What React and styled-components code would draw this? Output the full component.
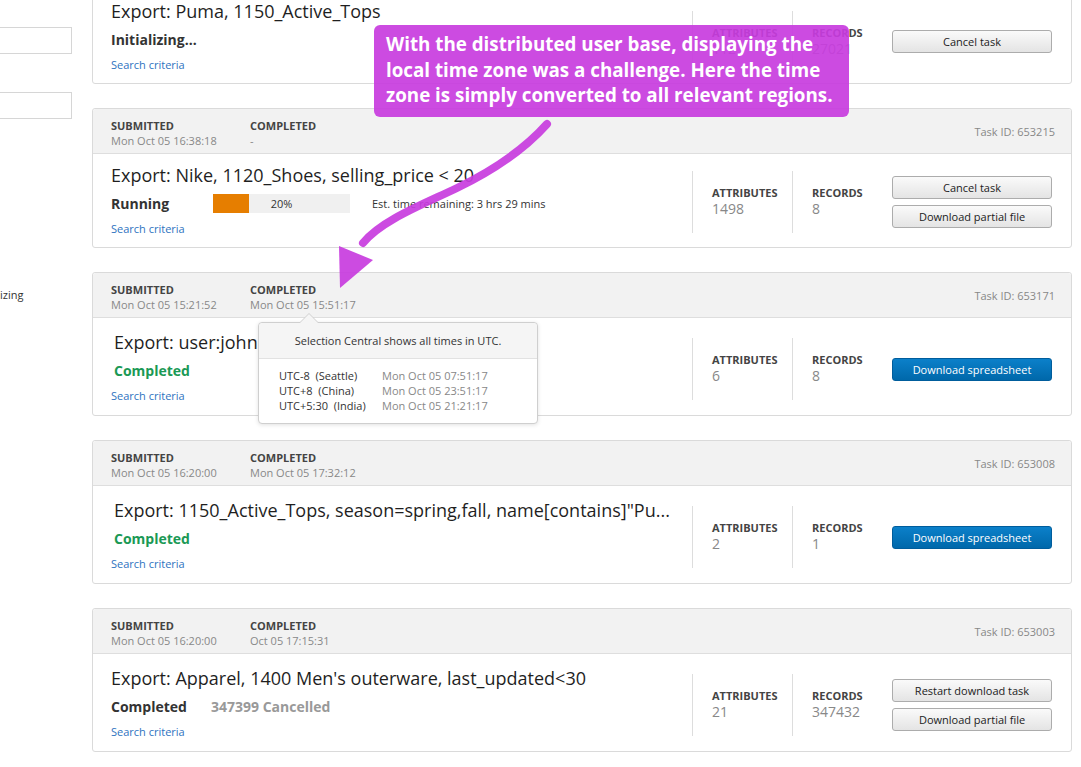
import React from 'react'
import styled, { createGlobalStyle } from 'styled-components'

const GlobalStyle = createGlobalStyle`
  *, *::before, *::after { box-sizing: border-box; }
  html, body { margin: 0; padding: 0; background: #fff; }
  body {
    font-family: "Open Sans", "Liberation Sans", Arial, sans-serif;
    color: #333;
    overflow: hidden;
  }
`

const Page = styled.div`
  position: relative;
  display: grid;
  grid-template-columns: 72px 980px;
  column-gap: 20px;
  width: 1081px;
  height: 767px;
  overflow: hidden;
`

const Sidebar = styled.aside`
  display: flex;
  flex-direction: column;
  gap: 38px;
  padding-top: 27px;
`

const Field = styled.div`
  height: 27px;
  border: 1px solid #d6d6d6;
  border-left: none;
  background: #fff;
`

const SideText = styled.div`
  margin-top: 130px;
  font-size: 11px;
  line-height: 16px;
  color: #333;
`

const Main = styled.main`
  display: flex;
  flex-direction: column;
  gap: 24px;
  margin-top: -56px;
`

const Card = styled.section`
  position: relative;
  border: 1px solid #dadada;
  border-radius: 3px;
  background: #fff;
`

const CardHeader = styled.header`
  display: flex;
  align-items: flex-start;
  height: 45px;
  padding: 10px 16px 0 18px;
  background: #f2f2f2;
  border-bottom: 1px solid #dedede;
  border-radius: 3px 3px 0 0;
`

const HeaderCol = styled.div`
  width: 139px;
`

const Label = styled.div`
  font-size: 11px;
  line-height: 14px;
  font-weight: 700;
  color: #444;
  text-transform: uppercase;
`

const Value = styled.div`
  font-size: 11px;
  line-height: 15px;
  color: #888;
`

const TaskId = styled.div`
  margin-left: auto;
  align-self: center;
  margin-top: -10px;
  font-size: 11px;
  color: #888;
`

const Body = styled.div`
  display: flex;
  align-items: center;
  padding: ${p => (p.$compact ? '8px 19px 10px 18px' : '11px 19px 11px 18px')};
`

const Info = styled.div`
  flex: 1;
  min-width: 0;
  padding-right: 20px;
`

const Title = styled.h2`
  margin: 0 0 0 ${p => p.$inset || 0}px;
  font-size: 18px;
  line-height: 26px;
  font-weight: 400;
  color: #1f1f1f;
  white-space: nowrap;
  overflow: hidden;
  text-overflow: ellipsis;
`

const StatusRow = styled.div`
  display: flex;
  align-items: center;
  height: 22px;
  margin-top: 4px;
  font-size: 14px;
`

const Status = styled.span`
  width: 100px;
  margin-left: ${p => p.$inset || 0}px;
  font-weight: 700;
  color: ${p => p.$color || '#333'};
`

const Muted = styled.span`
  font-weight: 700;
  color: #999;
`

const Progress = styled.div`
  position: relative;
  display: flex;
  align-items: center;
  justify-content: center;
  width: 137px;
  height: 19px;
  margin-left: 2px;
  background: #f0f0f0;
  font-size: 11px;
  color: #333;
`

const ProgressFill = styled.div`
  position: absolute;
  left: 0;
  top: 0;
  bottom: 0;
  background: #e67e00;
`

const ProgressText = styled.span`
  position: relative;
`

const Remaining = styled.span`
  margin-left: 22px;
  font-size: 11px;
  color: #333;
`

const Link = styled.a`
  display: block;
  margin-top: 7px;
  font-size: 11px;
  line-height: 16px;
  color: #2e73c0;
  text-decoration: none;
`

const Side = styled.div`
  display: flex;
  align-items: center;
  padding-top: ${p => (p.$lower ? 12 : 5)}px;
`

const Stat = styled.div`
  display: flex;
  flex-direction: column;
  justify-content: center;
  width: 100px;
  height: 62px;
  padding-left: 19px;
  border-left: 1px solid #ddd;
`

const StatValue = styled.div`
  font-size: 14px;
  line-height: 18px;
  color: #888;
`

const Actions = styled.div`
  display: flex;
  flex-direction: column;
  gap: 6px;
  width: 160px;
`

const Button = styled.button`
  height: 23px;
  padding: 0;
  border: 1px solid ${p => (p.$primary ? '#005d9c' : '#acacac')};
  border-radius: 3px;
  background: ${p =>
    p.$primary
      ? 'linear-gradient(#0b80ca, #0068aa)'
      : 'linear-gradient(#fafafa, #e4e4e4)'};
  font-family: inherit;
  font-size: 11px;
  color: ${p => (p.$primary ? '#fff' : '#222')};
`

const Tooltip = styled.div`
  position: absolute;
  left: 165px;
  top: 49px;
  width: 280px;
  z-index: 2;
  background: #fff;
  border: 1px solid #cfcfcf;
  border-radius: 4px;
  box-shadow: 0 1px 4px rgba(0, 0, 0, 0.12);

  &::before,
  &::after {
    content: '';
    position: absolute;
    left: 40px;
    border: 10px solid transparent;
    border-top: none;
  }
  &::before {
    top: -10px;
    border-bottom-color: #cfcfcf;
  }
  &::after {
    top: -9px;
    border-bottom-color: #f5f5f5;
  }
`

const TipHead = styled.div`
  height: 36px;
  line-height: 36px;
  text-align: center;
  font-size: 11px;
  color: #333;
  background: #f5f5f5;
  border-bottom: 1px solid #e2e2e2;
  border-radius: 4px 4px 0 0;
`

const TipBody = styled.div`
  display: grid;
  grid-template-columns: 103px auto;
  padding: 9px 20px 10px;
  font-size: 11px;
  line-height: 15px;
`

const Zone = styled.span`
  color: #333;
  white-space: pre;
`

const ZoneTime = styled.span`
  color: #888;
`

const Callout = styled.div`
  position: absolute;
  left: 374px;
  top: 25px;
  width: 475px;
  padding: 7px 0 8px 12px;
  z-index: 3;
  background: rgba(200, 60, 222, 0.92);
  border-radius: 6px;
  font-size: 18.8px;
  line-height: 25.5px;
  font-weight: 700;
  color: #fff;
  white-space: pre;
`

const Overlay = styled.svg`
  position: absolute;
  left: 0;
  top: 0;
  z-index: 3;
  pointer-events: none;
`

const tasks = [
  {
    id: '653220',
    submitted: 'Mon Oct 05 16:40:02',
    completed: '-',
    title: 'Export: Puma, 1150_Active_Tops',
    kind: 'init',
    lower: true,
    attrs: '112',
    records: '27021',
    actions: ['Cancel task'],
  },
  {
    id: '653215',
    submitted: 'Mon Oct 05 16:38:18',
    completed: '-',
    title: 'Export: Nike, 1120_Shoes, selling_price < 20',
    kind: 'running',
    progress: 26,
    attrs: '1498',
    records: '8',
    actions: ['Cancel task', 'Download partial file'],
  },
  {
    id: '653171',
    submitted: 'Mon Oct 05 15:21:52',
    completed: 'Mon Oct 05 15:51:17',
    title: 'Export: user:john',
    kind: 'done',
    inset: 3,
    tooltip: true,
    attrs: '6',
    records: '8',
    actions: ['Download spreadsheet'],
  },
  {
    id: '653008',
    submitted: 'Mon Oct 05 16:20:00',
    completed: 'Mon Oct 05 17:32:12',
    title: 'Export: 1150_Active_Tops, season=spring,fall, name[contains]"Pu...',
    kind: 'done',
    inset: 3,
    attrs: '2',
    records: '1',
    actions: ['Download spreadsheet'],
  },
  {
    id: '653003',
    submitted: 'Mon Oct 05 16:20:00',
    completed: 'Oct 05 17:15:31',
    title: "Export: Apparel, 1400 Men's outerware, last_updated<30",
    kind: 'partial',
    attrs: '21',
    records: '347432',
    actions: ['Restart download task', 'Download partial file'],
  },
]

const zones = [
  ['UTC-8  (Seattle)', 'Mon Oct 05 07:51:17'],
  ['UTC+8  (China)', 'Mon Oct 05 23:51:17'],
  ['UTC+5:30  (India)', 'Mon Oct 05 21:21:17'],
]

const StatusLine = ({ task }) => {
  if (task.kind === 'init') {
    return (
      <StatusRow>
        <Status>Initializing...</Status>
      </StatusRow>
    )
  }
  if (task.kind === 'running') {
    return (
      <StatusRow>
        <Status>Running</Status>
        <Progress>
          <ProgressFill style={{ width: `${task.progress}%` }} />
          <ProgressText>20%</ProgressText>
        </Progress>
        <Remaining>Est. time remaining: 3 hrs 29 mins</Remaining>
      </StatusRow>
    )
  }
  if (task.kind === 'partial') {
    return (
      <StatusRow>
        <Status>Completed</Status>
        <Muted>347399 Cancelled</Muted>
      </StatusRow>
    )
  }
  return (
    <StatusRow>
      <Status $color="#1a9955" $inset={task.inset}>
        Completed
      </Status>
    </StatusRow>
  )
}

const TaskCard = ({ task }) => {
  const compact = task.kind === 'init' || task.kind === 'running'
  return (
    <Card>
      <CardHeader>
        <HeaderCol>
          <Label>Submitted</Label>
          <Value>{task.submitted}</Value>
        </HeaderCol>
        <HeaderCol>
          <Label>Completed</Label>
          <Value>{task.completed}</Value>
        </HeaderCol>
        <TaskId>Task ID: {task.id}</TaskId>
      </CardHeader>
      <Body $compact={compact}>
        <Info>
          <Title $inset={task.inset}>{task.title}</Title>
          <StatusLine task={task} />
          <Link href="#">Search criteria</Link>
        </Info>
        <Side $lower={task.lower}>
          <Stat>
            <Label>Attributes</Label>
            <StatValue>{task.attrs}</StatValue>
          </Stat>
          <Stat>
            <Label>Records</Label>
            <StatValue>{task.records}</StatValue>
          </Stat>
          <Actions>
            {task.actions.map(a => (
              <Button key={a} $primary={a === 'Download spreadsheet'}>
                {a}
              </Button>
            ))}
          </Actions>
        </Side>
      </Body>
      {task.tooltip && (
        <Tooltip>
          <TipHead>Selection Central shows all times in UTC.</TipHead>
          <TipBody>
            {zones.map(([z, t]) => (
              <React.Fragment key={z}>
                <Zone>{z}</Zone>
                <ZoneTime>{t}</ZoneTime>
              </React.Fragment>
            ))}
          </TipBody>
        </Tooltip>
      )}
    </Card>
  )
}

const App = () => (
  <Page>
    <GlobalStyle />
    <Sidebar>
      <Field />
      <Field />
      <SideText>izing</SideText>
    </Sidebar>
    <Main>
      {tasks.map(t => (
        <TaskCard key={t.id} task={t} />
      ))}
    </Main>
    <Callout>
      {'With the distributed user base, displaying the\nlocal time zone was a challenge. Here the time\nzone is simply converted to all relevant regions.'}
    </Callout>
    <Overlay width="1081" height="767" viewBox="0 0 1081 767">
      <path
        d="M547,124 C522,152 490,172 457,188 S382,220 363,243"
        fill="none"
        stroke="rgba(200, 60, 222, 0.92)"
        strokeWidth="8"
        strokeLinecap="round"
      />
      <polygon points="339,246 373,260 340,288" fill="rgba(200, 60, 222, 0.92)" />
    </Overlay>
  </Page>
)

export default App
